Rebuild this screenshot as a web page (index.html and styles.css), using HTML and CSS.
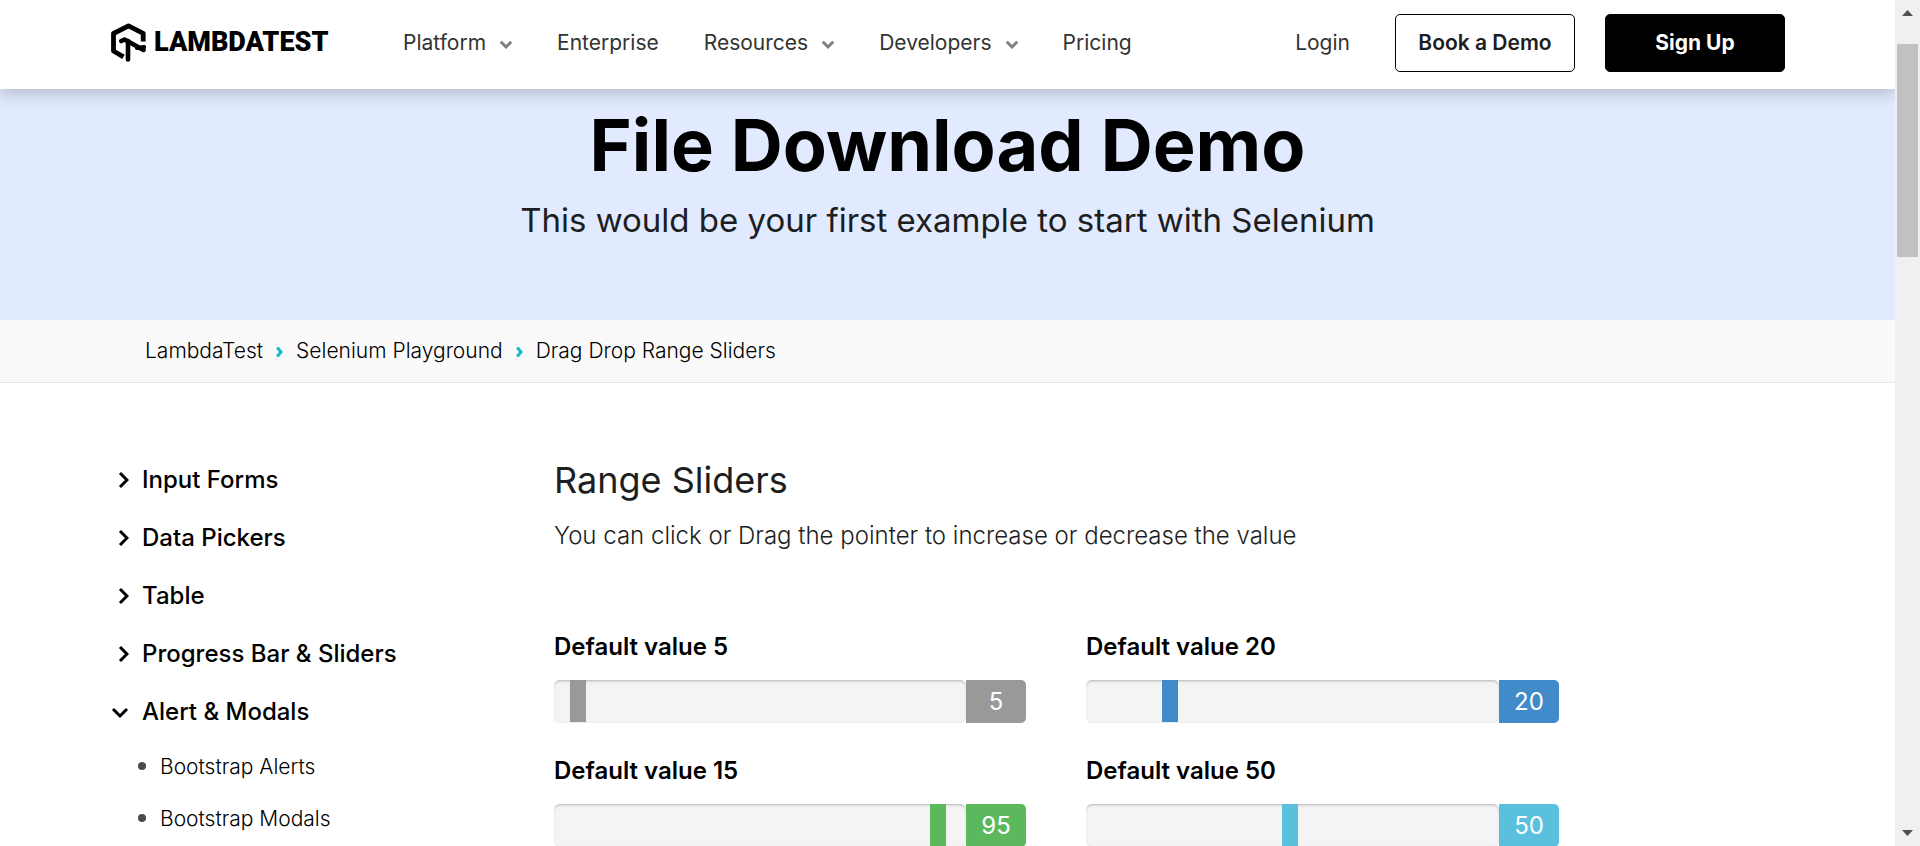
FILE: index.html
```html
<!DOCTYPE html>
<html lang="en">
<head>
<meta charset="utf-8">
<title>Selenium Playground | LambdaTest</title>
<link rel="stylesheet" href="styles.css">
</head>
<body>
<div class="page">
  <header class="topbar">
    <a class="logo" href="#" aria-label="LambdaTest">
      <svg width="35" height="39" viewBox="0 0 35 39" fill="none" stroke="#000" stroke-width="4.800" stroke-linejoin="round">
        <path d="M32.200 18.500V10.300L17.500 2.800L2.500 10.500V28L12.500 33.800"/>
        <path d="M10.300 18L13.500 16.500L32.500 27" stroke-width="4.600" stroke-linecap="round"/>
        <path d="M26 25L33 24" stroke-width="4.200" stroke-linecap="round"/>
        <path d="M17 18V36.500" stroke-width="4.600" stroke-linecap="round"/>
      </svg>
      <span class="wordmark">LAMBDATEST</span>
    </a>
    <nav class="nav">
      <a href="#">Platform<svg class="caret" viewBox="0 0 14 10"><path d="M1.800 1.800L7 7L12.200 1.800"/></svg></a>
      <a href="#">Enterprise</a>
      <a href="#">Resources<svg class="caret" viewBox="0 0 14 10"><path d="M1.800 1.800L7 7L12.200 1.800"/></svg></a>
      <a href="#">Developers<svg class="caret" viewBox="0 0 14 10"><path d="M1.800 1.800L7 7L12.200 1.800"/></svg></a>
      <a href="#">Pricing</a>
    </nav>
    <div class="actions">
      <a class="login" href="#">Login</a>
      <button class="btn" type="button">Book a Demo</button>
      <button class="btn btn-dark" type="button">Sign Up</button>
    </div>
  </header>

  <section class="hero">
    <h1>File Download Demo</h1>
    <p>This would be your first example to start with Selenium</p>
  </section>

  <nav class="crumbs" aria-label="Breadcrumb">
    <a href="#">LambdaTest</a>
    <svg class="sep" viewBox="0 0 7 12"><path d="M1.200 1.500L5 6L1.200 10.500"/></svg>
    <a href="#">Selenium Playground</a>
    <svg class="sep" viewBox="0 0 7 12"><path d="M1.200 1.500L5 6L1.200 10.500"/></svg>
    <span>Drag Drop Range Sliders</span>
  </nav>

  <div class="content">
    <aside class="menu">
      <a class="group" href="#"><svg class="arrow" viewBox="0 0 18 18"><path d="M9 2L16 9L9 16"/></svg>Input Forms</a>
      <a class="group" href="#"><svg class="arrow" viewBox="0 0 18 18"><path d="M9 2L16 9L9 16"/></svg>Data Pickers</a>
      <a class="group" href="#"><svg class="arrow" viewBox="0 0 18 18"><path d="M9 2L16 9L9 16"/></svg>Table</a>
      <a class="group" href="#"><svg class="arrow" viewBox="0 0 18 18"><path d="M9 2L16 9L9 16"/></svg>Progress Bar &amp; Sliders</a>
      <a class="group" href="#"><svg class="arrow" viewBox="0 0 18 18"><path d="M2 6L9 13L16 6"/></svg>Alert &amp; Modals</a>
      <ul class="sub">
        <li><a href="#">Bootstrap Alerts</a></li>
        <li><a href="#">Bootstrap Modals</a></li>
      </ul>
    </aside>

    <main class="main">
      <h2>Range Sliders</h2>
      <p class="lead">You can click or Drag the pointer to increase or decrease the value</p>
      <div class="sliders">
        <div class="field gray">
          <label for="s1">Default value 5</label>
          <div class="range"><input id="s1" type="range" min="1" max="100" value="5"><output for="s1">5</output></div>
        </div>
        <div class="field blue">
          <label for="s2">Default value 20</label>
          <div class="range"><input id="s2" type="range" min="1" max="100" value="20"><output for="s2">20</output></div>
        </div>
        <div class="field green">
          <label for="s3">Default value 15</label>
          <div class="range"><input id="s3" type="range" min="1" max="100" value="95"><output for="s3">95</output></div>
        </div>
        <div class="field cyan">
          <label for="s4">Default value 50</label>
          <div class="range"><input id="s4" type="range" min="1" max="100" value="50"><output for="s4">50</output></div>
        </div>
      </div>
    </main>
  </div>
</div>

<div class="scrollbar" aria-hidden="true">
  <svg width="11" height="6" viewBox="0 0 11 6"><path d="M0 6L5.500 0L11 6Z"/></svg>
  <div class="thumb"></div>
  <svg class="down" width="11" height="6" viewBox="0 0 11 6"><path d="M0 0L5.500 6L11 0Z"/></svg>
</div>
</body>
</html>
```

FILE: styles.css
```css
* { box-sizing: border-box; }

body {
  margin: 0;
  height: 100vh;
  display: flex;
  overflow: hidden;
  background: #fff;
  color: #000;
  font-family: Inter, "Liberation Sans", sans-serif;
  font-size: 20px;
}

a { color: inherit; text-decoration: none; }
h1, h2, p, ul { margin: 0; padding: 0; }

.page {
  flex: 1;
  min-width: 0;
  overflow: hidden;
}

/* Top bar */
.topbar {
  position: relative;
  display: flex;
  align-items: center;
  padding: 14px 110px 17px 111px;
  background: #fff;
  box-shadow: 0 5px 15px rgba(0, 0, 0, 0.2);
}

.logo {
  display: flex;
  align-items: center;
  gap: 8px;
  width: 292px;
  padding-bottom: 2px;
}

.wordmark {
  font: 900 27px/30px Roboto, "Liberation Sans", sans-serif;
}

.nav {
  display: flex;
  gap: 45px;
  padding-bottom: 1px;
  color: #333;
  font-size: 21px;
}

.nav a { display: flex; align-items: center; }

.caret {
  width: 14px;
  height: 10px;
  margin: 4px -1px 0 13px;
  fill: none;
  stroke: #808080;
  stroke-width: 3;
}

.actions {
  display: flex;
  align-items: center;
  margin-left: auto;
}

.login {
  margin-right: 45px;
  padding-bottom: 1px;
  color: #333;
  font-size: 21px;
}

.btn {
  width: 180px;
  height: 58px;
  border: 1px solid #000;
  border-radius: 5px;
  background: #fff;
  color: #1c1e21;
  font: 600 21px/30px Inter, "Liberation Sans", sans-serif;
}

.btn-dark {
  margin-left: 30px;
  background: #000;
  color: #fff;
  font-weight: 700;
}

/* Hero */
.hero {
  padding: 9px 0 75px;
  background: #e1eaff;
  text-align: center;
}

.hero h1 {
  font-size: 72px;
  line-height: 94px;
  font-weight: 700;
}

.hero p {
  margin-top: 3px;
  color: #1c1e21;
  font-size: 33px;
  line-height: 50px;
}

/* Breadcrumb */
.crumbs {
  display: flex;
  align-items: center;
  padding: 16px 145px;
  border-bottom: 1px solid #e5e5e5;
  background: #fafafa;
  font-size: 21px;
  line-height: 30px;
  font-weight: 300;
}

.sep {
  width: 7px;
  height: 12px;
  margin: 2px 13px 0;
  fill: none;
  stroke: #0ebac5;
  stroke-width: 3;
}

/* Content */
.content {
  display: flex;
  padding: 76px 110px 0;
}

.menu {
  width: 444px;
  padding-top: 1px;
}

.group {
  display: flex;
  align-items: center;
  gap: 13px;
  height: 58px;
  margin-left: 1px;
  font-size: 24px;
  line-height: 30px;
  font-weight: 500;
}

.menu .group:first-child { height: 40px; margin-bottom: 9px; }

.arrow {
  width: 18px;
  height: 18px;
  fill: none;
  stroke: #000;
  stroke-width: 3;
}

.sub {
  margin-top: -1px;
  list-style: none;
}

.sub li {
  display: flex;
  align-items: center;
  gap: 14px;
  height: 52px;
  padding-left: 28px;
  font-size: 21px;
  font-weight: 300;
}

.sub li::before {
  content: "";
  width: 8px;
  height: 8px;
  border-radius: 50%;
  background: #4a4a4a;
}

.main { flex: 1; }

.main h2 {
  color: #1c1e21;
  font-size: 36px;
  line-height: 42px;
  font-weight: 400;
}

.lead {
  margin-top: 17px;
  color: #1c1e21;
  font-size: 24px;
  line-height: 36px;
  font-weight: 300;
}

.sliders {
  display: grid;
  grid-template-columns: 472px 473px;
  gap: 36px 60px;
  margin-top: 81px;
}

.field label {
  display: block;
  margin-bottom: 22px;
  font-size: 24px;
  line-height: 23px;
  font-weight: 600;
}

.range { display: flex; height: 43px; }

.range input {
  -webkit-appearance: none;
  appearance: none;
  flex: 1;
  min-width: 0;
  height: 43px;
  margin: 0;
  border-radius: 6px;
  background: #f4f4f4;
  box-shadow: inset 0 3px 3px -2px rgba(0, 0, 0, 0.25), inset 0 0 2px rgba(0, 0, 0, 0.1);
}

.range input::-webkit-slider-thumb {
  -webkit-appearance: none;
  width: 16px;
  height: 42px;
  margin-bottom: 1px;
  background: var(--tone);
}

.range output {
  width: 60px;
  border-radius: 0 5px 5px 0;
  background: var(--tone);
  color: #fff;
  font-size: 24px;
  line-height: 43px;
  text-align: center;
}

.gray { --tone: #999; }
.blue { --tone: #428bca; }
.green { --tone: #5cb85c; }
.cyan { --tone: #5bc0de; }

/* Scrollbar */
.scrollbar {
  display: flex;
  flex-direction: column;
  align-items: center;
  width: 25px;
  padding: 10px 0;
  background: #f0f0f0;
}

.scrollbar svg { fill: #505050; }

.thumb {
  width: 21px;
  height: 213px;
  margin-top: 28px;
  background: #c1c1c1;
}

.down { margin-top: auto; }
```
